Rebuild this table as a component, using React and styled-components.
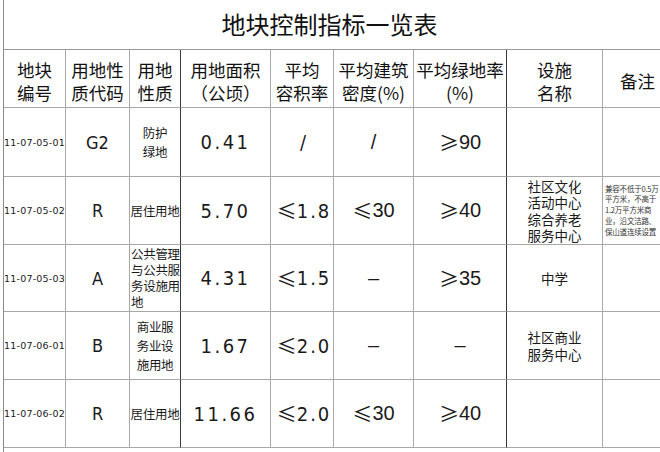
import React from "react";
import styled, { createGlobalStyle } from "styled-components";

const GlobalStyle = createGlobalStyle`
  html, body {
    margin: 0;
    padding: 0;
    background: #fff;
    overflow: hidden;
  }
  body {
    font-family: "Noto Sans CJK SC", "Noto Sans", sans-serif;
    color: #1a1a1a;
  }
`;

const cols = [62, 64, 51, 90, 63, 80, 93, 96, 70];
const rowHeights = [50, 58, 69, 68, 67, 68, 68];

const rows = [
  {
    id: "11-07-05-01",
    code: "G2",
    kind: ["防护", "绿地"],
    area: "0.41",
    far: ["", "/"],
    density: ["", "/"],
    green: ["≥", "90"],
    facility: [],
    note: [],
  },
  {
    id: "11-07-05-02",
    code: "R",
    kind: ["居住用地"],
    area: "5.70",
    far: ["≤", "1.8"],
    density: ["≤", "30"],
    green: ["≥", "40"],
    facility: ["社区文化", "活动中心", "综合养老", "服务中心"],
    note: ["兼容不低于0.5万", "平方米，不高于", "1.2万平方米商", "业，沿文洁路、", "保山道连续设置"],
  },
  {
    id: "11-07-05-03",
    code: "A",
    kind: ["公共管理", "与公共服", "务设施用", "地"],
    tight: true,
    area: "4.31",
    far: ["≤", "1.5"],
    density: ["", "–"],
    green: ["≥", "35"],
    facility: ["中学"],
    note: [],
  },
  {
    id: "11-07-06-01",
    code: "B",
    kind: ["商业服", "务业设", "施用地"],
    area: "1.67",
    far: ["≤", "2.0"],
    density: ["", "–"],
    green: ["", "–"],
    facility: ["社区商业", "服务中心"],
    note: [],
  },
  {
    id: "11-07-06-02",
    code: "R",
    kind: ["居住用地"],
    area: "11.66",
    far: ["≤", "2.0"],
    density: ["≤", "30"],
    green: ["≥", "40"],
    facility: [],
    note: [],
  },
];

const headers = [
  ["地块", "编号"],
  ["用地性", "质代码"],
  ["用地", "性质"],
  ["用地面积", "（公顷）"],
  ["平均", "容积率"],
  ["平均建筑", "密度(%)"],
  ["平均绿地率", "(%)"],
  ["设施", "名称"],
  ["备注"],
];

const darkAfter = [2, 6];

export default function App() {
  return (
    <Page>
      <GlobalStyle />
      <Sheet>
        <Title>地块控制指标一览表</Title>
        {headers.map((h, i) => (
          <Head key={i} $dark={darkAfter.includes(i)}>
            {h.map((line, j) => (
              <div key={j}>{line}</div>
            ))}
          </Head>
        ))}
        {rows.map((r) => (
          <React.Fragment key={r.id}>
            <IdCell>{r.id}</IdCell>
            <CodeCell>{r.code}</CodeCell>
            <KindCell $tight={r.tight} $dark>
              {r.kind.map((k, i) => (
                <div key={i}>{k}</div>
              ))}
            </KindCell>
            <NumCell>{r.area}</NumCell>
            <FarCell>
              <Sym>{r.far[0]}</Sym>
              {r.far[1]}
            </FarCell>
            <RatioCell>
              <Sym>{r.density[0]}</Sym>
              {r.density[1]}
            </RatioCell>
            <RatioCell $dark>
              <Sym>{r.green[0]}</Sym>
              {r.green[1]}
            </RatioCell>
            <FacilityCell>
              {r.facility.map((f, i) => (
                <div key={i}>{f}</div>
              ))}
            </FacilityCell>
            <NoteCell>
              {r.note.map((n, i) => (
                <div key={i}>{n}</div>
              ))}
            </NoteCell>
          </React.Fragment>
        ))}
      </Sheet>
    </Page>
  );
}

const Page = styled.div`
  width: 660px;
  height: 452px;
  overflow: hidden;
  padding-left: 3px;
  box-sizing: border-box;
`;

const Sheet = styled.div`
  display: grid;
  grid-template-columns: ${cols.map((c) => c + "px").join(" ")};
  grid-template-rows: ${rowHeights.map((r) => r + "px").join(" ")};
  border-left: 1px solid #8a8a8a;
  width: max-content;
  height: 452px;
  align-content: start;
`;

const Title = styled.div`
  grid-column: 1 / -1;
  display: flex;
  align-items: center;
  justify-content: center;
  padding-right: 18px;
  padding-bottom: 2px;
  font-size: 24px;
  color: #111;
  border-bottom: 1px solid #9a9a9a;
  box-sizing: border-box;
`;

const Cell = styled.div`
  box-sizing: border-box;
  display: flex;
  flex-direction: column;
  align-items: center;
  justify-content: center;
  text-align: center;
  border-right: 1px solid ${(p) => (p.$dark ? "#3a3a3a" : "#a8a8a8")};
  border-bottom: 1px solid #a8a8a8;
  overflow: hidden;
  white-space: nowrap;
`;

const Head = styled(Cell)`
  font-size: 17.5px;
  line-height: 23px;
  color: #111;
  padding-top: 4px;
`;

const IdCell = styled(Cell)`
  font-size: 9.5px;
  letter-spacing: 0.2px;
  font-family: "DejaVu Sans", "Noto Sans", sans-serif;
`;

const CodeCell = styled(Cell)`
  font-size: 18px;
  font-family: "DejaVu Sans Condensed", "DejaVu Sans", sans-serif;
`;

const KindCell = styled(Cell)`
  font-size: 12.5px;
  letter-spacing: -0.3px;
  line-height: ${(p) => (p.$tight ? "16px" : "19px")};
  align-items: ${(p) => (p.$tight ? "flex-start" : "center")};
  padding-left: ${(p) => (p.$tight ? "1px" : "0")};
`;

const NumCell = styled(Cell)`
  font-size: 20px;
  letter-spacing: 2.5px;
  font-family: "DejaVu Sans Condensed", "DejaVu Sans", sans-serif;
`;

const FarCell = styled(NumCell)`
  flex-direction: row;
  letter-spacing: 2px;
  padding-left: 4px;
`;

const RatioCell = styled(Cell)`
  flex-direction: row;
  font-size: 20px;
  font-family: "Liberation Sans", "Noto Sans", sans-serif;
`;

const Sym = styled.span`
  font-family: "Noto Sans CJK SC", sans-serif;
  font-size: 20px;
  letter-spacing: 0;
`;

const FacilityCell = styled(Cell)`
  font-size: 13.5px;
  line-height: 16.5px;
`;

const NoteCell = styled(Cell)`
  font-size: 7.5px;
  line-height: 10.8px;
  align-items: flex-start;
  text-align: left;
  padding-left: 2px;
  color: #333;
  letter-spacing: -0.2px;
`;
